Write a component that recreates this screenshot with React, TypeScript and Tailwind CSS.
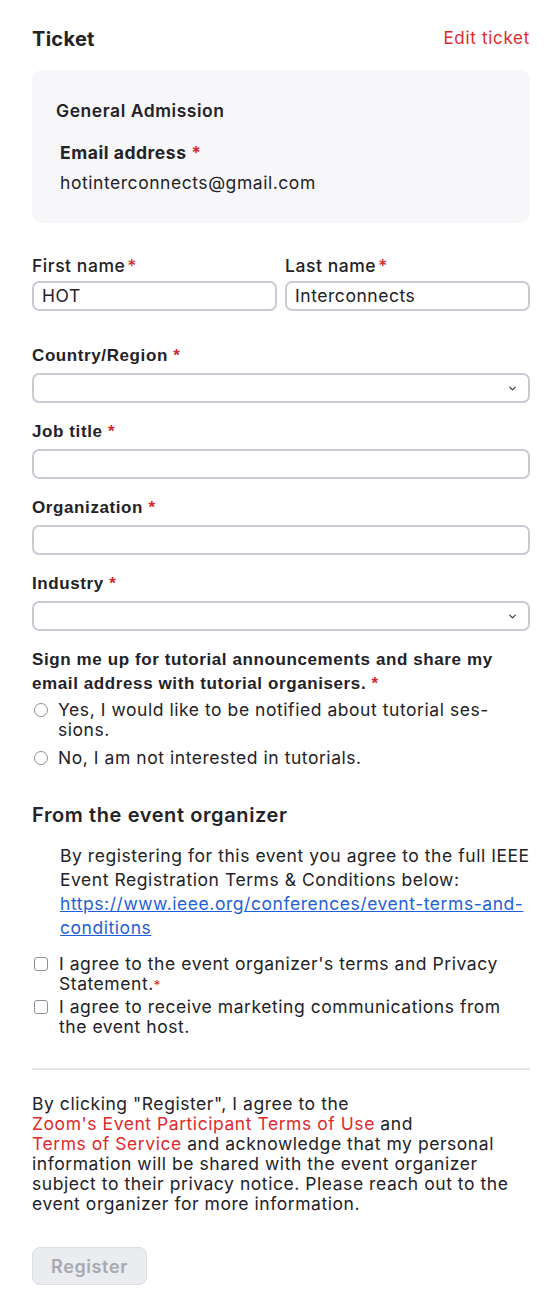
import { ChevronDown } from "lucide-react";

const body = "font-['Inter',_'Noto_Sans',_sans-serif] tracking-[0.55px]";
const helv = "font-['Liberation_Sans',_Arial,_sans-serif] tracking-[0.6px]";

function Star({ className = "" }: { className?: string }) {
  return <span className={`text-[#d9272e] ${className}`}>*</span>;
}

function FieldLabel({ children }: { children: React.ReactNode }) {
  return (
    <div className={`${helv} text-[17px] leading-6 font-bold text-[#222228]`}>
      {children} <Star />
    </div>
  );
}

function TextBox({ value = "" }: { value?: string }) {
  return (
    <div className="flex h-[30px] items-center rounded-[7px] border-2 border-[#c9ccd2] bg-white px-2 text-[17.5px] text-[#222228]">
      {value}
    </div>
  );
}

function SelectBox() {
  return (
    <div className="flex h-[30px] items-center justify-end rounded-[7px] border-2 border-[#c9ccd2] bg-white pr-[10px]">
      <ChevronDown size={11} strokeWidth={2.5} className="text-[#333]" />
    </div>
  );
}

function Radio({ children }: { children: React.ReactNode }) {
  return (
    <div className="flex gap-[10px] text-[17.5px] leading-5">
      <span className="mt-[3px] ml-[2px] h-[14px] w-[14px] shrink-0 rounded-full border border-[#8d9199]" />
      <span>{children}</span>
    </div>
  );
}

function Check({ children }: { children: React.ReactNode }) {
  return (
    <div className="flex gap-[11px] text-[17.5px] leading-5">
      <span className="mt-[3px] ml-[2px] h-[14px] w-[14px] shrink-0 rounded-[3px] border-[1.5px] border-[#8d9199]" />
      <span>{children}</span>
    </div>
  );
}

export default function App() {
  return (
    <div className={`${body} w-[560px] bg-white pl-8 pr-[30px] pt-[27px] pb-[19px] text-[#222228]`}>
      {/* Header */}
      <div className="flex h-6 items-center justify-between">
        <h2 className="text-[20px] font-bold tracking-[0.3px]">Ticket</h2>
        <span className="text-[17px] tracking-[0.7px] text-[#e0292b]">Edit ticket</span>
      </div>

      {/* Ticket card */}
      <div className="mt-[19px] rounded-[10px] bg-[#f7f7f9] pl-6 pt-[29px] pb-[28px]">
        <div className="text-[17.5px] leading-6 font-semibold">General Admission</div>
        <div className="mt-[18px] pl-1">
          <div className="text-[17.5px] leading-6 font-bold">
            Email address <Star />
          </div>
          <div className="mt-[6px] text-[17.5px] leading-6">hotinterconnects@gmail.com</div>
        </div>
      </div>

      {/* Names */}
      <div className="mt-[31px] grid grid-cols-2 gap-2">
        <div>
          <div className="text-[17.5px] leading-6 font-medium">
            First name<Star className="ml-0.5" />
          </div>
          <div className="mt-[3px]">
            <TextBox value="HOT" />
          </div>
        </div>
        <div>
          <div className="text-[17.5px] leading-6 font-medium">
            Last name<Star className="ml-0.5" />
          </div>
          <div className="mt-[3px]">
            <TextBox value="Interconnects" />
          </div>
        </div>
      </div>

      <div className="mt-[33px]">
        <FieldLabel>Country/Region</FieldLabel>
        <div className="mt-[5px]">
          <SelectBox />
        </div>
      </div>
      <div className="mt-[17px]">
        <FieldLabel>Job title</FieldLabel>
        <div className="mt-[5px]">
          <TextBox />
        </div>
      </div>
      <div className="mt-[17px]">
        <FieldLabel>Organization</FieldLabel>
        <div className="mt-[5px]">
          <TextBox />
        </div>
      </div>
      <div className="mt-[17px]">
        <FieldLabel>Industry</FieldLabel>
        <div className="mt-[5px]">
          <SelectBox />
        </div>
      </div>

      {/* Tutorial question */}
      <div className={`${helv} mt-[17px] text-[17px] leading-6 font-bold`}>
        Sign me up for tutorial announcements and share my
        <br />
        email address with tutorial organisers. <Star />
      </div>
      <div className="mt-1">
        <Radio>
          Yes, I would like to be notified about tutorial ses-
          <br />
          sions.
        </Radio>
      </div>
      <div className="mt-2">
        <Radio>No, I am not interested in tutorials.</Radio>
      </div>

      {/* Organizer */}
      <h3 className="mt-[35px] text-[20px] leading-6 font-semibold tracking-[0.6px]">From the event organizer</h3>
      <p className="mt-[17px] pl-7 text-[17.5px] leading-6">
        By registering for this event you agree to the full IEEE
        <br />
        Event Registration Terms &amp; Conditions below:
        <br />
        <a className="text-[#1f5fd9] underline">
          https://www.ieee.org/conferences/event-terms-and-
          <br />
          conditions
        </a>
      </p>
      <div className="mt-[14px]">
        <Check>
          I agree to the event organizer's terms and Privacy
          <br />
          Statement.
          <Star className="text-[13px]" />
        </Check>
      </div>
      <div className="mt-[2px]">
        <Check>
          I agree to receive marketing communications from
          <br />
          the event host.
        </Check>
      </div>

      <div className="mt-[31px] h-[2px] bg-[#e4e5e9]" />

      {/* Footer */}
      <p className="mt-[24px] text-[17.5px] leading-5">
        By clicking "Register", I agree to the
        <br />
        <span className="text-[#e0292b]">Zoom's Event Participant Terms of Use</span> and
        <br />
        <span className="text-[#e0292b]">Terms of Service</span> and acknowledge that my personal
        <br />
        information will be shared with the event organizer
        <br />
        subject to their privacy notice. Please reach out to the
        <br />
        event organizer for more information.
      </p>

      <button className="mt-[33px] h-[38px] w-[115px] rounded-[8px] border border-[#dcdde2] bg-[#ebecef] text-[18px] font-semibold tracking-[0.6px] text-[#a6a9b2]">
        Register
      </button>
    </div>
  );
}
